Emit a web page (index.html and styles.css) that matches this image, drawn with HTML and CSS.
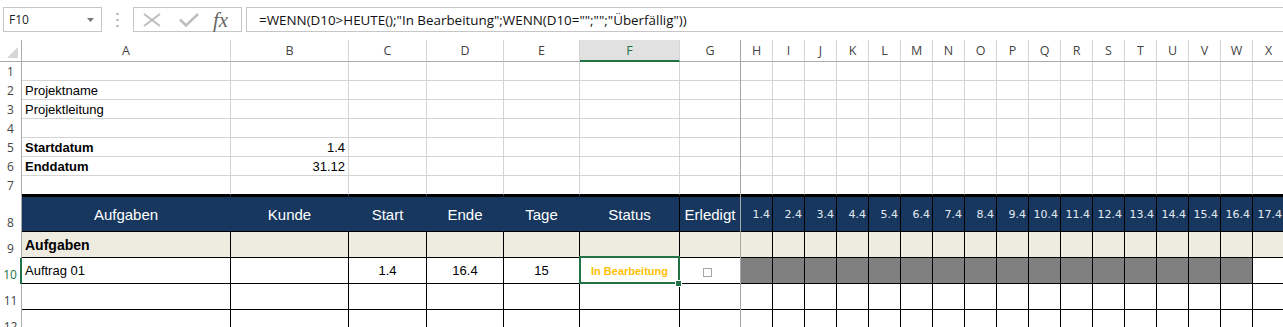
FILE: index.html
```html
<!DOCTYPE html>
<html lang="de">
<head>
    <meta charset="UTF-8">
    <title>Projektplan</title>
    <link rel="stylesheet" href="styles.css">
</head>
<body>
    <div class="fbar">
        <div class="namebox">
            <span>F10</span>
            <svg width="7" height="4" viewBox="0 0 7 4"><path d="M0 0H7L3.5 4Z" fill="#777"/></svg>
        </div>
        <div class="grip">
            <svg width="3" height="14" viewBox="0 0 3 14"><rect x="0.5" y="0" width="2" height="2" fill="#aaa"/><rect x="0.5" y="6" width="2" height="2" fill="#aaa"/><rect x="0.5" y="12" width="2" height="2" fill="#aaa"/></svg>
        </div>
        <div class="fbtns">
            <svg class="ic-x" width="18" height="14" viewBox="0 0 18 14"><path d="M1 1L17 13M17 1L1 13" stroke="#bdbdbd" stroke-width="2" fill="none"/></svg>
            <svg class="ic-ok" width="20" height="14" viewBox="0 0 20 14"><path d="M1 6.5L7 12.5L19 1" stroke="#bdbdbd" stroke-width="2.5" fill="none"/></svg>
            <span class="fx">fx</span>
        </div>
        <div class="formula">=WENN(D10&gt;HEUTE();"In Bearbeitung";WENN(D10="";"";"Überfällig"))</div>
    </div>

    <div class="sheet">
        <div class="r ch">
            <div class="corner"><svg width="11" height="11" viewBox="0 0 11 11"><path d="M11 0V11H0Z" fill="#d6d6d6"/></svg></div>
            <div>A</div><div>B</div><div>C</div><div>D</div><div>E</div><div class="cur">F</div><div>G</div>
            <div>H</div><div>I</div><div>J</div><div>K</div><div>L</div><div>M</div><div>N</div><div>O</div><div>P</div>
            <div>Q</div><div>R</div><div>S</div><div>T</div><div>U</div><div>V</div><div>W</div><div>X</div>
        </div>

        <div class="r">
            <div class="rh">1</div>
            <div></div><div></div><div></div><div></div><div></div><div></div><div></div>
            <div></div><div></div><div></div><div></div><div></div><div></div><div></div><div></div><div></div>
            <div></div><div></div><div></div><div></div><div></div><div></div><div></div><div></div>
        </div>
        <div class="r">
            <div class="rh">2</div>
            <div>Projektname</div><div></div><div></div><div></div><div></div><div></div><div></div>
            <div></div><div></div><div></div><div></div><div></div><div></div><div></div><div></div><div></div>
            <div></div><div></div><div></div><div></div><div></div><div></div><div></div><div></div>
        </div>
        <div class="r">
            <div class="rh">3</div>
            <div>Projektleitung</div><div></div><div></div><div></div><div></div><div></div><div></div>
            <div></div><div></div><div></div><div></div><div></div><div></div><div></div><div></div><div></div>
            <div></div><div></div><div></div><div></div><div></div><div></div><div></div><div></div>
        </div>
        <div class="r">
            <div class="rh">4</div>
            <div></div><div></div><div></div><div></div><div></div><div></div><div></div>
            <div></div><div></div><div></div><div></div><div></div><div></div><div></div><div></div><div></div>
            <div></div><div></div><div></div><div></div><div></div><div></div><div></div><div></div>
        </div>
        <div class="r">
            <div class="rh">5</div>
            <div class="bold">Startdatum</div><div class="num">1.4</div><div></div><div></div><div></div><div></div><div></div>
            <div></div><div></div><div></div><div></div><div></div><div></div><div></div><div></div><div></div>
            <div></div><div></div><div></div><div></div><div></div><div></div><div></div><div></div>
        </div>
        <div class="r">
            <div class="rh">6</div>
            <div class="bold">Enddatum</div><div class="num">31.12</div><div></div><div></div><div></div><div></div><div></div>
            <div></div><div></div><div></div><div></div><div></div><div></div><div></div><div></div><div></div>
            <div></div><div></div><div></div><div></div><div></div><div></div><div></div><div></div>
        </div>
        <div class="r last">
            <div class="rh">7</div>
            <div></div><div></div><div></div><div></div><div></div><div></div><div></div>
            <div></div><div></div><div></div><div></div><div></div><div></div><div></div><div></div><div></div>
            <div></div><div></div><div></div><div></div><div></div><div></div><div></div><div></div>
        </div>

        <div class="r hdr">
            <div class="rh">8</div>
            <div>Aufgaben</div><div>Kunde</div><div>Start</div><div>Ende</div><div>Tage</div><div class="edge">Status</div><div class="edge">Erledigt</div>
            <div class="d">1.4</div><div class="d">2.4</div><div class="d">3.4</div><div class="d">4.4</div><div class="d">5.4</div><div class="d">6.4</div>
            <div class="d">7.4</div><div class="d">8.4</div><div class="d">9.4</div><div class="d">10.4</div><div class="d">11.4</div><div class="d">12.4</div>
            <div class="d">13.4</div><div class="d">14.4</div><div class="d">15.4</div><div class="d">16.4</div><div class="d">17.4</div>
        </div>
        <div class="r t sec">
            <div class="rh">9</div>
            <div class="group">Aufgaben</div><div></div><div></div><div></div><div></div><div></div><div></div>
            <div></div><div></div><div></div><div></div><div></div><div></div><div></div><div></div><div></div>
            <div></div><div></div><div></div><div></div><div></div><div></div><div></div><div></div>
        </div>
        <div class="r t">
            <div class="rh cur">10</div>
            <div>Auftrag 01</div><div></div><div class="mid">1.4</div><div class="mid">16.4</div><div class="mid">15</div>
            <div class="mid sel"><span class="status">In Bearbeitung</span></div>
            <div class="mid"><span class="check"></span></div>
            <div class="bar"></div><div class="bar"></div><div class="bar"></div><div class="bar"></div><div class="bar"></div><div class="bar"></div>
            <div class="bar"></div><div class="bar"></div><div class="bar"></div><div class="bar"></div><div class="bar"></div><div class="bar"></div>
            <div class="bar"></div><div class="bar"></div><div class="bar"></div><div class="bar"></div><div></div>
        </div>
        <div class="r t">
            <div class="rh">11</div>
            <div></div><div></div><div></div><div></div><div></div><div></div><div></div>
            <div></div><div></div><div></div><div></div><div></div><div></div><div></div><div></div><div></div>
            <div></div><div></div><div></div><div></div><div></div><div></div><div></div><div></div>
        </div>
        <div class="r t">
            <div class="rh">12</div>
            <div></div><div></div><div></div><div></div><div></div><div></div><div></div>
            <div></div><div></div><div></div><div></div><div></div><div></div><div></div><div></div><div></div>
            <div></div><div></div><div></div><div></div><div></div><div></div><div></div><div></div>
        </div>

        <div class="freeze"></div>
    </div>
</body>
</html>
```

FILE: styles.css
```css
body { margin: 0; background: #fff; font-family: "Liberation Sans", Arial, sans-serif; font-size: 13px; color: #000; overflow: hidden; }

/* formula bar */
.fbar { display: flex; align-items: flex-start; height: 40px; box-sizing: border-box; padding: 7px 0 0 3px; font-family: "Open Sans", sans-serif; }
.namebox { width: 99px; height: 25px; box-sizing: border-box; border: 1px solid #c6c6c6; display: flex; align-items: center; justify-content: space-between; padding: 0 7px 0 5px; font-size: 12px; color: #222; }
.grip { width: 31px; display: flex; justify-content: center; padding-top: 6px; }
.fbtns { width: 109px; height: 25px; box-sizing: border-box; border: 1px solid #c6c6c6; display: flex; align-items: center; padding-left: 9px; }
.fbtns .ic-ok { margin-left: 18px; }
.fbtns .fx { margin-left: 14px; font-family: "Liberation Serif", serif; font-style: italic; font-size: 21px; color: #666; line-height: 20px; }
.formula { flex: 1; margin-left: 4px; height: 25px; box-sizing: border-box; border: 1px solid #c6c6c6; border-right: none; padding-left: 12px; display: flex; align-items: center; font-size: 13.4px; color: #111; white-space: nowrap; }

/* sheet grid */
.sheet { position: relative; }
.r { display: grid; grid-template-columns: 22px 209px 118px 78px 77px 76px 100px 61px repeat(17, 32px); height: 19px; }
.r > div { box-sizing: border-box; border-right: 1px solid #d4d4d4; border-bottom: 1px solid #d4d4d4; display: flex; align-items: center; padding: 0 3px; white-space: nowrap; overflow: hidden; }
.r > .rh { justify-content: center; align-items: flex-end; padding: 0 0 1px 0; border-bottom: none; border-right-color: #ababab; font-family: "Open Sans", sans-serif; font-size: 12px; color: #444; }
.r > .rh.cur { color: #217346; border-right: 2px solid #217346; }

.ch { height: 22px; }
.ch > div { justify-content: center; border-bottom-color: #ababab; font-family: "Open Sans", sans-serif; font-size: 12.5px; color: #444; }
.ch > .corner { justify-content: flex-end; align-items: flex-end; padding: 0 3px 3px 0; border-right-color: #ababab; }
.ch > .cur { background: #e1e1e1; color: #217346; border-bottom: 2px solid #217346; }

.bold { font-weight: bold; }
.r > .num { justify-content: flex-end; }
.r > .mid { justify-content: center; }
.last > div:not(.rh) { border-bottom-color: #000; }

/* table header */
.hdr { height: 37px; }
.hdr > div:not(.rh) { background: #17375e; color: #fff; font-size: 15px; justify-content: center; border-top: 2px solid #000; border-bottom-color: #000; border-right-color: #17375e; }
.hdr > div.edge, .hdr > div.d { border-right-color: #000; }
.hdr > div.d { justify-content: flex-end; padding: 0 2px 0 0; font-family: "DejaVu Sans", Verdana, sans-serif; font-size: 11px; color: #e4eaf2; }

/* table body */
.t { height: 26px; }
.t > div:not(.rh) { border-right-color: #000; border-bottom-color: #000; }
.sec > div:not(.rh) { background: #eeece1; }
.group { font-size: 14px; font-weight: bold; }
.r > .bar { background: #808080; }

.status { color: #ffc000; font-weight: bold; font-size: 11px; }
.r > .sel { position: relative; overflow: visible; }
.sel::after { content: ""; position: absolute; left: -1px; top: -2px; right: -1px; bottom: -1px; border: 2px solid #217346; }
.sel::before { content: ""; position: absolute; right: -3px; bottom: -4px; width: 5px; height: 5px; background: #217346; border: 1px solid #fff; z-index: 2; }
.check { width: 9px; height: 9px; box-sizing: border-box; border: 1px solid #a6a6a6; background: #fff; margin: 3px 6px 0 0; }

.freeze { position: absolute; left: 740px; top: 0; bottom: 0; width: 1px; background: #a6a6a6; }
```
